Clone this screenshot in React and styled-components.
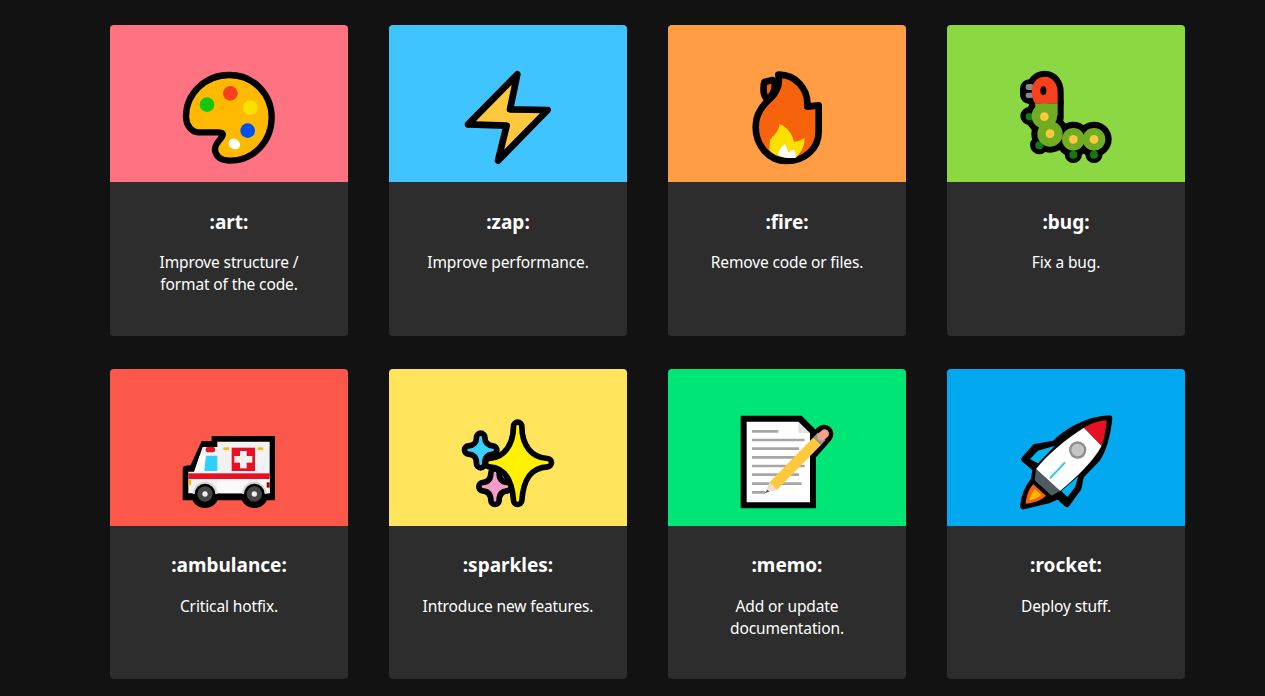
import React from 'react';
import styled, { createGlobalStyle } from 'styled-components';

const GlobalStyle = createGlobalStyle`
  html, body {
    margin: 0;
    padding: 0;
    background-color: #121212;
  }
  body {
    font-family: "Noto Sans", "Open Sans", sans-serif;
    color: #fff;
  }
`;

const Grid = styled.main`
  display: grid;
  grid-template-columns: repeat(4, 238px);
  column-gap: 41px;
  row-gap: 33px;
  padding: 25px 0 17px 110px;
`;

const Card = styled.article`
  border-radius: 4px;
  overflow: hidden;
  background-color: #2d2d2d;
`;

const Banner = styled.div`
  display: flex;
  justify-content: center;
  height: 157px;
  padding-top: 45px;
  box-sizing: border-box;
  background-color: ${({ $bg }) => $bg};
`;

const Emoji = styled.svg`
  display: block;
  width: 96px;
  height: 96px;
`;

const Body = styled.div`
  height: 153.5px;
  box-sizing: border-box;
  padding: 25.7px 24px 0;
  text-align: center;
`;

const Title = styled.h2`
  margin: 0 0 15.4px;
  font-size: 19px;
  line-height: 28px;
  font-weight: 700;
`;

const Desc = styled.p`
  margin: 0;
  font-size: 15.5px;
  line-height: 22px;
  letter-spacing: -0.13px;
  color: #fff;
`;

const Palette = () => (
  <Emoji viewBox="213 150 288 288">
    <path d="M358 165 C430 165 485 222 485 292 C485 365 430 422 360 422 C332 422 315 408 315 388 C315 368 335 358 338 346 C340 338 332 337 322 337 L265 337 C245 337 228 315 228 290 C228 222 285 165 358 165Z" fill="#ffb900" stroke="#000" strokeWidth="19" strokeLinejoin="round" />
    <circle cx="291" cy="254" r="22" fill="#16c60c" />
    <circle cx="361" cy="220" r="22" fill="#f7411e" />
    <circle cx="421" cy="263" r="22" fill="#fce100" />
    <circle cx="413" cy="332" r="22" fill="#0050ef" />
    <ellipse cx="373" cy="372" rx="18" ry="15" fill="#fff" transform="rotate(30 373 372)" />
  </Emoji>
);

const Zap = () => (
  <Emoji viewBox="60 30 288 288">
    <path d="M232 43 L210 148 L323 150 L174 302 L200 197 L84 193Z" fill="#ffc83d" stroke="#000" strokeWidth="20" strokeLinejoin="round" />
  </Emoji>
);

const Fire = () => (
  <Emoji viewBox="27 30 288 288">
    <path d="M128 60 L103 66 C98 90 100 108 112 118 C135 100 140 75 128 60Z" fill="#f7630c" stroke="#000" strokeWidth="20" strokeLinejoin="round" />
    <path d="M145 44 C195 43 236 85 232 140 L266 136 L266 215 C266 265 225 303 170 303 C115 303 77 255 77 200 C77 160 98 135 120 116 C140 98 150 72 145 44Z" fill="#f7630c" stroke="#000" strokeWidth="20" strokeLinejoin="round" />
    <path d="M118 270 L120 240 C130 225 148 215 148 192 C172 200 188 225 192 245 C205 245 215 240 223 234 C226 258 212 278 198 293 C170 296 138 292 118 270Z" fill="#fce100" />
    <path d="M145 284 C145 270 155 260 165 252 C170 262 172 270 175 276 L192 268 C198 280 198 288 197 293 C178 296 160 294 145 284Z" fill="#fff" />
  </Emoji>
);

const bugHead = 'M65 95 C65 70 80 50 104 50 C128 50 143 72 143 95 L143 130 L75 130 C70 120 65 110 65 95Z';

const Bug = () => (
  <Emoji viewBox="24 30 288 288">
    <g fill="#000" stroke="#000" strokeWidth="36" strokeLinejoin="round">
      <path d={bugHead} />
      <rect x="48" y="76" width="22" height="38" rx="10" />
      <path d="M143 125 L143 175 L103 175Z" />
      <circle cx="58" cy="168" r="9" />
      <circle cx="88" cy="255" r="10" />
      <circle cx="190" cy="283" r="8" />
      <circle cx="252" cy="283" r="8" />
    </g>
    <g fill="#000">
      <circle cx="103" cy="168" r="56" />
      <circle cx="120" cy="222" r="56" />
      <circle cx="190" cy="238" r="53" />
      <circle cx="252" cy="238" r="53" />
    </g>
    <rect x="47" y="72" width="24" height="18" rx="8" fill="#8a8a8a" />
    <rect x="47" y="98" width="24" height="16" rx="7" fill="#8a8a8a" />
    <circle cx="58" cy="170" r="11" fill="#107c10" />
    <circle cx="88" cy="256" r="12" fill="#107c10" />
    <circle cx="190" cy="284" r="12" fill="#107c10" />
    <circle cx="252" cy="284" r="12" fill="#107c10" />
    <path d="M75 130 L143 130 L143 165 L125 190 L80 180Z" fill="#70ad22" />
    <circle cx="103" cy="168" r="38" fill="#70ad22" />
    <circle cx="120" cy="222" r="38" fill="#70ad22" />
    <circle cx="190" cy="238" r="34" fill="#70ad22" />
    <circle cx="252" cy="238" r="34" fill="#70ad22" />
    <path d={bugHead} fill="#f7411e" />
    <ellipse cx="100" cy="92" rx="9" ry="13" fill="#000" />
    <g fill="#ffc83d">
      <circle cx="103" cy="170" r="13" />
      <circle cx="120" cy="221" r="13" />
      <circle cx="190" cy="238" r="13" />
      <circle cx="252" cy="238" r="13" />
    </g>
  </Emoji>
);

const Ambulance = () => (
  <Emoji viewBox="33 -33 288 288">
    <path d="M125 33 H315 V226 H38 V132 Q38 122 48 122 L62 120 L95 48 H125Z" fill="#000" />
    <path d="M142 50 H299 V205 H55 V140 H72 L98 66 H142Z" fill="#f2f2f2" />
    <path d="M142 162 H299 V205 H142Z" fill="#fafafa" />
    <path d="M108 92 H142 V138 H103Z" fill="#2fd0ff" />
    <path d="M89 92 H106 L101 138 H75Z" fill="#fff" />
    <rect x="107" y="66" width="28" height="16" rx="6" fill="#e81123" />
    <rect x="55" y="145" width="244" height="17" fill="#e81123" />
    <rect x="185" y="68" width="70" height="70" fill="#e81123" />
    <rect x="193" y="93" width="54" height="20" fill="#f2f2f2" />
    <rect x="210" y="78" width="20" height="52" fill="#f2f2f2" />
    <rect x="160" y="67" width="17" height="8" fill="#ffb900" />
    <rect x="263" y="67" width="17" height="8" fill="#ffb900" />
    <rect x="55" y="165" width="8" height="15" fill="#ffb900" />
    <rect x="290" y="172" width="9" height="16" fill="#a80000" />
    <circle cx="105" cy="207" r="37" fill="#d6d6d6" />
    <circle cx="253" cy="207" r="37" fill="#d6d6d6" />
    <path d="M63 207 A42 42 0 0 0 147 207Z" fill="#000" />
    <path d="M211 207 A42 42 0 0 0 295 207Z" fill="#000" />
    <circle cx="105" cy="207" r="31" fill="#000" />
    <circle cx="253" cy="207" r="31" fill="#000" />
    <circle cx="105" cy="207" r="23" fill="#464646" />
    <circle cx="253" cy="207" r="23" fill="#464646" />
    <circle cx="105" cy="207" r="8" fill="#eee" />
    <circle cx="253" cy="207" r="8" fill="#eee" />
  </Emoji>
);

const bigStar = 'M203 49 C203 110 235 155 292 158 C235 161 208 200 203 271 C198 200 170 161 119 158 C170 155 203 110 203 49Z';
const blueStar = 'M92 82 C92 105 105 118 128 120 C105 122 92 135 92 161 C92 135 80 122 56 120 C80 118 92 105 92 82Z';
const pinkStar = 'M135 189 C135 212 148 228 171 230 C148 232 135 248 135 271 C135 248 122 232 99 230 C122 228 135 212 135 189Z';

const Sparkles = () => (
  <Emoji viewBox="30 12 288 288">
    <g fill="#000" stroke="#000" strokeWidth="42" strokeLinejoin="round">
      <path d={blueStar} />
      <path d={pinkStar} />
      <path d={bigStar} />
    </g>
    <path d={blueStar} fill="#38d0ff" stroke="#38d0ff" strokeWidth="8" strokeLinejoin="round" />
    <path d={pinkStar} fill="#f59cc8" stroke="#f59cc8" strokeWidth="8" strokeLinejoin="round" />
    <path d={bigStar} fill="#fff100" stroke="#fff100" strokeWidth="8" strokeLinejoin="round" />
  </Emoji>
);

const memoLines = [
  [79, 145], [105, 224], [131, 207], [157, 224],
  [183, 224], [209, 207], [236, 215], [262, 105],
];

const Memo = () => (
  <Emoji viewBox="27 27 288 288">
    <path d="M282 87 L240 135" stroke="#000" strokeWidth="56" strokeLinecap="round" />
    <path d="M32 32 H215 L258 75 V310 H32Z" fill="#000" />
    <path d="M50 50 H205 L240 85 V292 H50Z" fill="#fff" />
    <path d="M205 50 L240 85 H205Z" fill="#e3e3e3" />
    {memoLines.map(([y, end]) => (
      <line key={y} x1="66" x2={end} y1={y} y2={y} stroke="#a6a6a6" strokeWidth="8" />
    ))}
    <line x1="262" y1="108" x2="130" y2="243" stroke="#ffc83d" strokeWidth="32" />
    <line x1="275" y1="94" x2="262" y2="108" stroke="#9a9a9a" strokeWidth="32" />
    <line x1="284" y1="86" x2="275" y2="94" stroke="#f4a08a" strokeWidth="26" strokeLinecap="round" />
    <path d="M119 231 L142 255 L106 262Z" fill="#f6dcc2" />
    <path d="M112 254 L118 260 L104 264Z" fill="#555" />
  </Emoji>
);

const Rocket = () => (
  <Emoji viewBox="24 27 288 288">
    <path d="M297 41 C292 85 285 125 262 160 L212 212 L205 248 L170 296 L145 272 L112 286 L40 303 C42 280 52 250 72 225 L78 192 L44 163 L75 127 L135 116 C165 85 225 45 297 41Z" fill="#000" stroke="#000" strokeWidth="20" strokeLinejoin="round" />
    <path d="M135 122 L84 175 L60 162 L84 137Z" fill="#00b7f5" />
    <path d="M205 214 L195 246 L172 276 L154 258Z" fill="#00b7f5" />
    <path d="M70 238 C55 252 48 278 47 296 C65 294 92 288 108 272Z" fill="#f7630c" />
    <path d="M74 252 C66 262 60 276 58 286 C70 284 84 278 94 270Z" fill="#ffb900" />
    <path d="M222 68 L275 122 C250 170 200 215 150 258 L78 192 C110 150 170 100 222 68Z" fill="#fff" />
    <path d="M78 192 L150 258 L125 272 L74 226Z" fill="#4f5b62" />
    <path d="M222 68 C245 55 270 46 290 46 C288 70 285 95 275 122Z" fill="#e81123" />
    <circle cx="203" cy="135" r="26" fill="#8e8e8e" />
    <circle cx="203" cy="135" r="19" fill="#c4c4c4" />
    <line x1="120" y1="220" x2="165" y2="172" stroke="#2fc0ff" strokeWidth="6" />
  </Emoji>
);

const cards = [
  { code: ':art:', desc: ['Improve structure /', 'format of the code.'], bg: '#ff7281', Icon: Palette },
  { code: ':zap:', desc: ['Improve performance.'], bg: '#40c4ff', Icon: Zap },
  { code: ':fire:', desc: ['Remove code or files.'], bg: '#ff9d45', Icon: Fire },
  { code: ':bug:', desc: ['Fix a bug.'], bg: '#8cd842', Icon: Bug },
  { code: ':ambulance:', desc: ['Critical hotfix.'], bg: '#fb584a', Icon: Ambulance },
  { code: ':sparkles:', desc: ['Introduce new features.'], bg: '#ffe45c', Icon: Sparkles },
  { code: ':memo:', desc: ['Add or update', 'documentation.'], bg: '#00e676', Icon: Memo },
  { code: ':rocket:', desc: ['Deploy stuff.'], bg: '#03a9f0', Icon: Rocket },
];

const App = () => {
  return (
    <>
      <GlobalStyle />
      <Grid>
        {cards.map(({ code, desc, bg, Icon }) => (
          <Card key={code}>
            <Banner $bg={bg}>
              <Icon />
            </Banner>
            <Body>
              <Title>{code}</Title>
              <Desc>
                {desc.map((line) => (
                  <React.Fragment key={line}>{line}<br /></React.Fragment>
                ))}
              </Desc>
            </Body>
          </Card>
        ))}
      </Grid>
    </>
  );
};

export default App;
